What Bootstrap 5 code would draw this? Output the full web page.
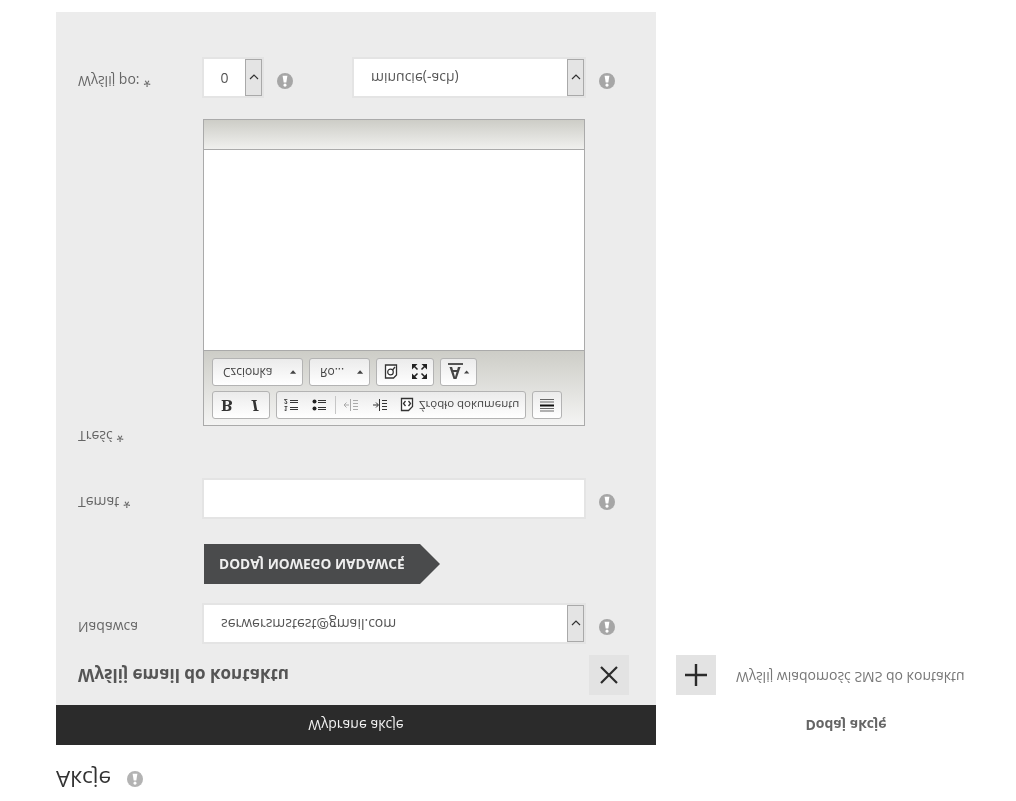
<!DOCTYPE html>
<html lang="pl">
<head>
<meta charset="utf-8">
<title>Akcje</title>
<link rel="stylesheet" href="https://cdn.jsdelivr.net/npm/bootstrap@5.3.0/dist/css/bootstrap.min.css">
<style>
html,body{height:801px;overflow:hidden;background:#fff}
body{font-family:"Open Sans","Liberation Sans",sans-serif;font-size:14px;color:#555}
.sheet{height:801px;overflow:hidden;padding-left:56px;transform:scaleY(-1)}
.head-block{height:44px;margin-bottom:12px;gap:16px}
.head-block h2{font-size:22.5px;font-weight:400;color:#333;margin:0;line-height:44px}
.info-ic{width:16px;height:16px;flex:none;display:block}
.info-pale{opacity:.85}
.left-col{width:600px;flex:none}
.right-col{width:340px;margin-left:20px;flex:none}
.tab-dark{height:40px;background:#2b2b2b;color:#f2f2f2;font-size:14px;padding-bottom:2px}
.tab-light{height:40px;font-weight:700;color:#666;font-size:14px;padding-bottom:2px}
.panel-box{height:693px;background:#ececec;padding:10px 27px 0 22px}
.panel-title{height:40px}
.panel-title h3{font-size:17px;font-weight:700;color:#555;margin:0}
.sq-btn{width:40px;height:40px;background:#e3e3e3;border:0;padding:0;flex:none}
.field-row{margin-top:11px;height:41px}
.field-label{width:124px;flex:none;font-size:14px;color:#666;padding-bottom:8px}
.field-box{border:2px solid #e4e4e4;background:#fff;height:100%;width:384px;flex:none}
.field-text{flex:1;padding:0 0 2px 17px;color:#555;font-size:14px;white-space:nowrap;overflow:hidden}
.field-input{display:block;width:100%;height:100%;border:0;padding:0 15px;background:#fff;outline:0}
.spin-box{width:17px;flex:none;background:#e4e4e4;border:1px solid #a9a9a9}
.info-gap{margin:0 0 8px 13px}
.send-btn{height:40px;width:236px;margin-left:126px;margin-top:19px;background:#4a4b4c;color:#eee;font-weight:700;font-size:13.7px;border:0;border-radius:0;padding:0 0 0 15px;text-transform:uppercase;white-space:nowrap;clip-path:polygon(0 0,216px 0,100% 50%,216px 100%,0 100%);text-align:left}
.temat-row{margin-top:25px}
.tresc-label{margin-top:32px;line-height:20px;font-size:14px;color:#666}
.cke-box{margin-left:125px;width:382px;height:307px;border:1px solid #aaa}
.cke-top{height:75px;padding:6px 0 0 8px;background:linear-gradient(#f4f4f3,#cdcdc7);border-bottom:1px solid #aaa;gap:5px}
.cke-line{gap:6px;height:28px}
.cke-group{height:28px;border:1px solid #b3b3b3;border-radius:3px;background:linear-gradient(#fff,#ebebeb);color:#444;font-size:12px}
.g-bi{width:58px}.g-list{width:250px}.g-hr{width:30px}
.g-font{width:91px;padding:0 5px 0 10px}.g-size{width:61px;padding:0 5px 0 10px}.g-tools{width:58px}.g-color{width:37px;gap:1px}
.ic-cell{width:28px;flex:none}
.sep-line{width:1px;height:18px;background:#c6c6c6;flex:none;margin:0 1px 0 2px}
.indent-cell{margin-left:1px}
.src-icon{margin-left:6px;flex:none}
.cke-b{font-family:"DejaVu Serif","Liberation Serif",serif;font-weight:700;font-size:14px;color:#333;line-height:1}
.cke-a{font-weight:700;font-size:16px;color:#444}
.src-label{font-size:11.5px;white-space:nowrap;margin-left:5px}
.cke-body{height:200px;background:#fff}
.cke-foot{height:30px;background:linear-gradient(#f0f0ee,#cdcdc7);border-top:1px solid #aaa}
.num-row{margin-top:21px;height:41px}
.num-box{border:2px solid #e4e4e4;background:#fff;height:100%;width:62px;flex:none}
.num-val{flex:1;text-align:center;color:#555;padding-bottom:2px}
.unit-box{border:2px solid #e4e4e4;background:#fff;height:100%;width:234px;flex:none;margin-left:59px}
.action-row{margin-top:10px;height:40px}
.action-row span{margin-left:20px;padding-bottom:6px;color:#777;font-size:14px;white-space:nowrap}
</style>
</head>
<body>
<svg width="0" height="0" class="d-block" aria-hidden="true">
  <symbol id="i-info" viewBox="0 0 16 16"><circle cx="8" cy="8" r="8" fill="#a6a6a6"/><circle cx="8" cy="3.800" r="1.600" fill="#fff"/><path d="M6.700 6.400h2.600l1.100 6.800H5.600z" fill="#fff"/></symbol>
  <symbol id="i-chev" viewBox="0 0 10 6"><path d="M1 1l4 4 4-4" fill="none" stroke="#333" stroke-width="1.200"/></symbol>
  <symbol id="i-caret" viewBox="0 0 8 4"><path d="M0 0h7L3.500 4z" fill="#444"/></symbol>
</svg>
<div class="sheet">
  <div class="d-flex align-items-center head-block">
    <h2>Akcje</h2>
    <svg class="info-ic info-pale"><use href="#i-info"/></svg>
  </div>
  <div class="d-flex">
    <div class="left-col">
      <div class="tab-dark d-flex align-items-center justify-content-center">Wybrane akcje</div>
      <div class="panel-box">
        <div class="panel-title d-flex align-items-center justify-content-between">
          <h3>Wyślij email do kontaktu</h3>
          <button class="sq-btn d-flex align-items-center justify-content-center" type="button" aria-label="Usuń">
            <svg width="20" height="20" viewBox="0 0 20 20"><path d="M2 2l16 16M18 2L2 18" stroke="#2b2b2b" stroke-width="2.200" fill="none"/></svg>
          </button>
        </div>
        <div class="field-row d-flex align-items-center">
          <div class="field-label">Nadawca</div>
          <div class="field-box d-flex">
            <div class="field-text d-flex align-items-center">serwersmstest@gmail.com</div>
            <div class="spin-box d-flex align-items-center justify-content-center"><svg width="10" height="6"><use href="#i-chev"/></svg></div>
          </div>
          <svg class="info-ic info-gap"><use href="#i-info"/></svg>
        </div>
        <button type="button" class="btn send-btn d-block">Dodaj nowego nadawcę</button>
        <div class="field-row temat-row d-flex align-items-center">
          <div class="field-label">Temat *</div>
          <div class="field-box"><input class="field-input" type="text" aria-label="Temat"></div>
          <svg class="info-ic info-gap"><use href="#i-info"/></svg>
        </div>
        <div class="tresc-label">Treść *</div>
        <div class="cke-box">
          <div class="cke-top d-flex flex-column">
            <div class="cke-line d-flex">
              <div class="cke-group g-bi d-flex align-items-center justify-content-center">
                <span class="ic-cell text-center cke-b">B</span><span class="ic-cell text-center cke-b fst-italic">I</span>
              </div>
              <div class="cke-group g-list d-flex align-items-center">
                <span class="ic-cell d-flex justify-content-center"><svg width="14" height="14" viewBox="0 0 14 14"><text x="0" y="6" font-size="6.500" font-weight="700" fill="#333" font-family="Liberation Sans">1</text><text x="0" y="13" font-size="6.500" font-weight="700" fill="#333" font-family="Liberation Sans">2</text><path d="M6 2.500h8M6 4.500h8M6 9.500h8M6 11.500h8" stroke="#333"/></svg></span>
                <span class="ic-cell d-flex justify-content-center"><svg width="14" height="14" viewBox="0 0 14 14"><circle cx="2.500" cy="3.500" r="2" fill="#222"/><circle cx="2.500" cy="10.500" r="2" fill="#222"/><path d="M6 2.500h8M6 4.500h8M6 9.500h8M6 11.500h8" stroke="#333"/></svg></span>
                <span class="sep-line"></span>
                <span class="ic-cell d-flex justify-content-center"><svg width="14" height="14" viewBox="0 0 14 14"><path d="M6.500 1v12M9 2.500h5M9 5.500h5M9 8.500h5M9 11.500h5M5 7H0M2.500 4.500L0 7l2.500 2.500" stroke="#aaa" fill="none"/></svg></span>
                <span class="ic-cell indent-cell d-flex justify-content-center"><svg width="14" height="14" viewBox="0 0 14 14"><path d="M6.500 1v12M9 2.500h5M9 5.500h5M9 8.500h5M9 11.500h5M0 7h5M3 4.500L5.500 7 3 9.500" stroke="#333" fill="none"/></svg></span>
                <svg width="14" height="15" viewBox="0 0 14 15" class="src-icon"><path d="M1.500 1.500h7l4 4v8h-11z" fill="#fff" stroke="#333" stroke-width="1.300"/><path d="M5.500 6L3.500 8.500l2 2.500M8.500 6l2 2.500-2 2.500" fill="none" stroke="#333" stroke-width="1.300"/></svg>
                <span class="src-label">Źródło dokumentu</span>
              </div>
              <div class="cke-group g-hr d-flex align-items-center justify-content-center">
                <svg width="16" height="16" viewBox="0 0 16 16"><path d="M1 2h14M1 4.500h14M1 11h14M1 13.500h14" stroke="#666"/><path d="M1 7.500h14" stroke="#111" stroke-width="2"/></svg>
              </div>
            </div>
            <div class="cke-line d-flex">
              <div class="cke-group g-font d-flex align-items-center justify-content-between"><span>Czcionka</span><svg width="7" height="4"><use href="#i-caret"/></svg></div>
              <div class="cke-group g-size d-flex align-items-center justify-content-between"><span>Ro...</span><svg width="7" height="4"><use href="#i-caret"/></svg></div>
              <div class="cke-group g-tools d-flex align-items-center justify-content-center">
                <span class="ic-cell d-flex justify-content-center"><svg width="14" height="15" viewBox="0 0 14 15"><path d="M1.500 1h8l3 3v10h-11z" fill="#fff" stroke="#333" stroke-width="1.300"/><circle cx="6.500" cy="7" r="2.800" fill="none" stroke="#333" stroke-width="1.200"/><path d="M8.500 9l2.500 3" stroke="#333" stroke-width="1.300"/></svg></span>
                <span class="ic-cell d-flex justify-content-center"><svg width="15" height="15" viewBox="0 0 15 15"><path d="M0 0h5.500L0 5.500zM15 0v5.500L9.500 0zM0 15v-5.500L5.500 15zM15 15H9.500L15 9.500z" fill="#222"/><path d="M2 2l3.500 3.500M13 2L9.500 5.500M2 13l3.500-3.500M13 13L9.500 9.500" stroke="#222" stroke-width="1.500"/></svg></span>
              </div>
              <div class="cke-group g-color d-flex align-items-center justify-content-center">
                <span class="d-flex flex-column align-items-center"><span class="cke-a lh-1">A</span><svg width="15" height="2" class="d-block"><rect width="15" height="2" fill="#555"/></svg></span>
                <svg width="6" height="4"><use href="#i-caret"/></svg>
              </div>
            </div>
          </div>
          <div class="cke-body"></div>
          <div class="cke-foot"></div>
        </div>
        <div class="num-row d-flex align-items-center">
          <div class="field-label">Wyślij po: *</div>
          <div class="num-box d-flex">
            <div class="num-val d-flex align-items-center justify-content-center">0</div>
            <div class="spin-box d-flex align-items-center justify-content-center"><svg width="10" height="6"><use href="#i-chev"/></svg></div>
          </div>
          <svg class="info-ic info-gap"><use href="#i-info"/></svg>
          <div class="unit-box d-flex">
            <div class="field-text d-flex align-items-center">minucie(-ach)</div>
            <div class="spin-box d-flex align-items-center justify-content-center"><svg width="10" height="6"><use href="#i-chev"/></svg></div>
          </div>
          <svg class="info-ic info-gap"><use href="#i-info"/></svg>
        </div>
      </div>
    </div>
    <div class="right-col">
      <div class="tab-light d-flex align-items-center justify-content-center">Dodaj akcję</div>
      <div class="action-row d-flex align-items-center">
        <button class="sq-btn d-flex align-items-center justify-content-center" type="button" aria-label="Dodaj">
          <svg width="22" height="22" viewBox="0 0 22 22"><path d="M11 0v22M0 11h22" stroke="#2b2b2b" stroke-width="2.400" fill="none"/></svg>
        </button>
        <span>Wyślij wiadomość SMS do kontaktu</span>
      </div>
    </div>
  </div>
</div>
<script src="https://cdn.jsdelivr.net/npm/bootstrap@5.3.0/dist/js/bootstrap.bundle.min.js"></script>
</body>
</html>
